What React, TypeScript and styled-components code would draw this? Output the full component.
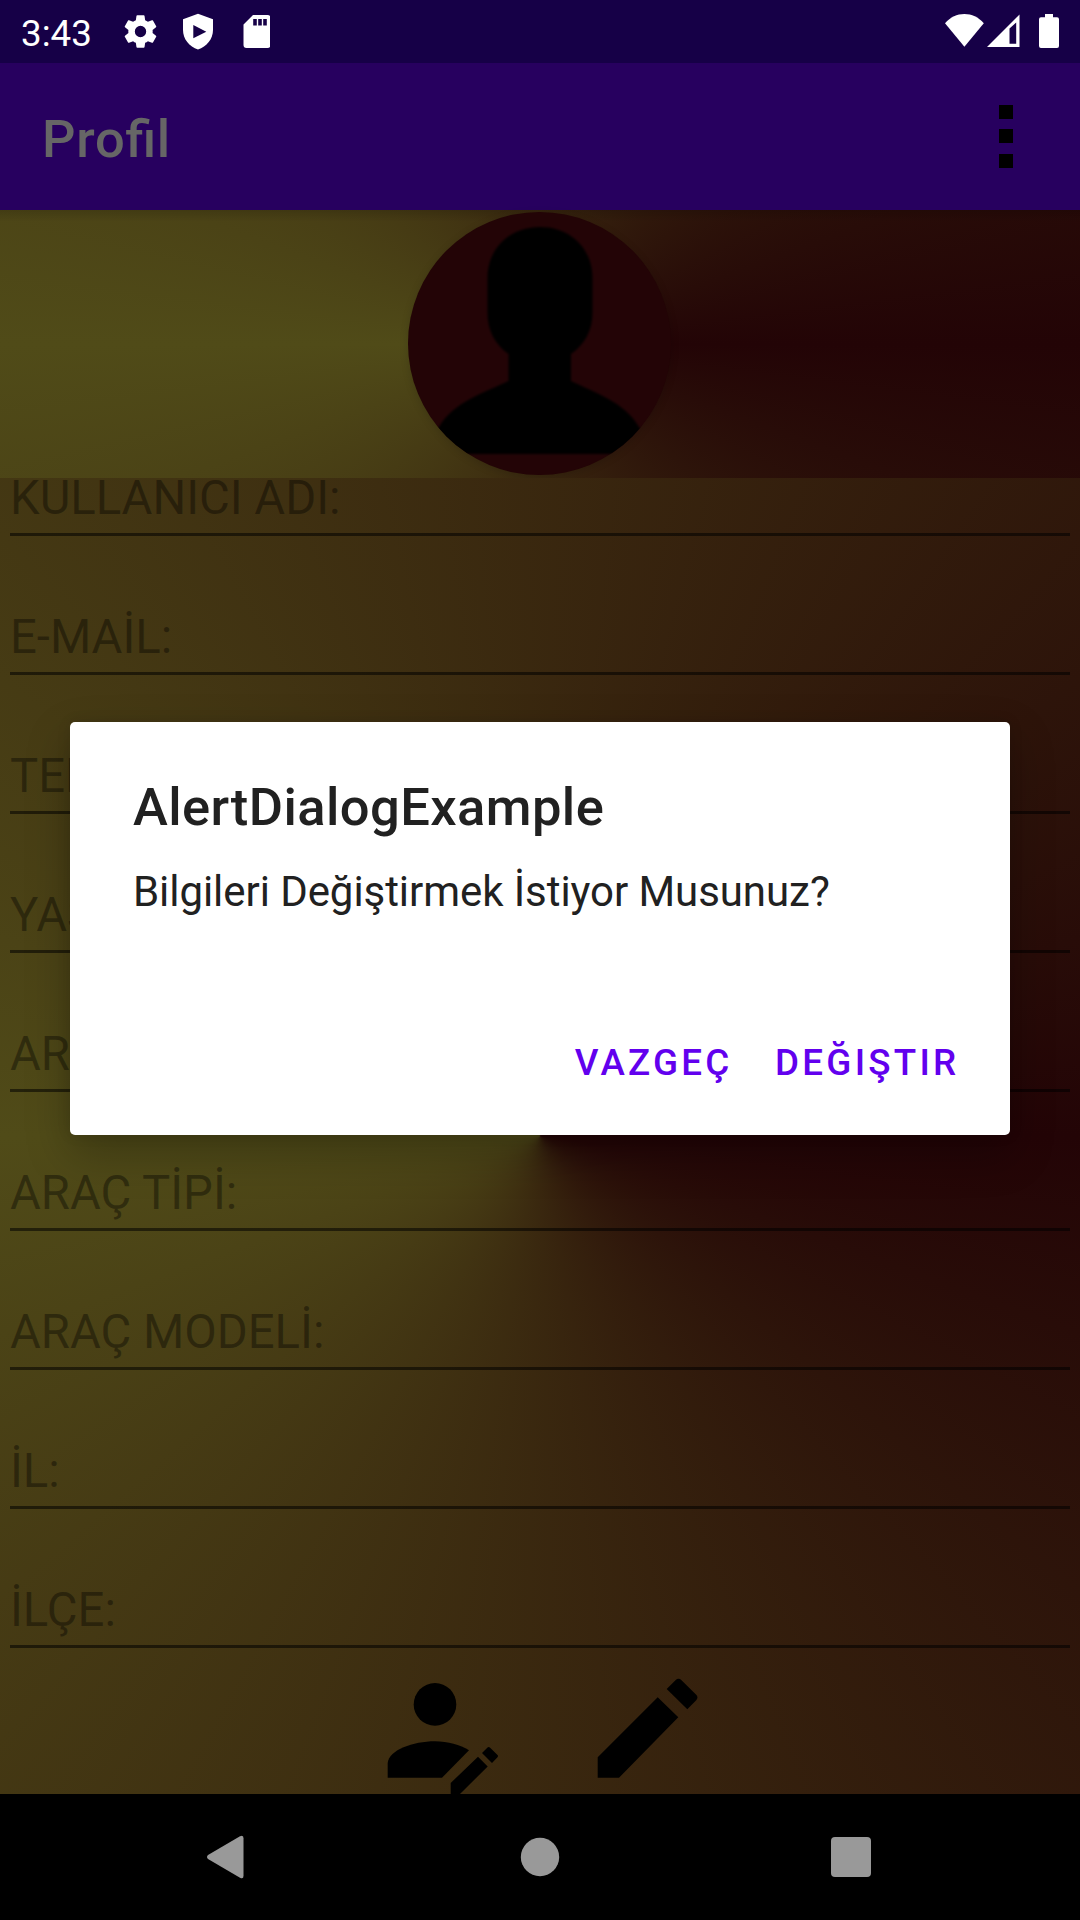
import React from "react";
import styled, { createGlobalStyle } from "styled-components";

const GlobalStyle = createGlobalStyle`
  * { box-sizing: border-box; }
  body { margin: 0; background: #000; font-family: Roboto, "Noto Sans", sans-serif; }
`;

const sweep = "conic-gradient(from 90deg at 50% 50%, #230406, #504b18, #230406)";

const Screen = styled.div`
  position: relative;
  display: flex;
  flex-direction: column;
  width: 1080px;
  height: 1920px;
  overflow: hidden;
`;

const StatusBar = styled.div`
  display: flex;
  justify-content: space-between;
  flex: none;
  height: 63px;
  padding: 0 21px 0 21px;
  background: #160047;
`;

const StatusGroup = styled.div<{ $gap: number }>`
  display: flex;
  align-items: flex-start;
  gap: ${(p) => p.$gap}px;
  padding-top: 12px;
`;

const Clock = styled.span`
  color: #fff;
  font-size: 36.75px;
  line-height: 43px;
  width: 76px;
`;

const StatusSpacer = styled.span`
  width: 13px;
`;

const AppBar = styled.header`
  display: flex;
  align-items: center;
  justify-content: space-between;
  flex: none;
  height: 147px;
  padding: 0 66px 0 42px;
  background: #27005f;
`;

const AppTitle = styled.h1`
  margin: 0;
  padding-top: 4px;
  color: #666;
  font-size: 52.5px;
  font-weight: 500;
  line-height: 62px;
  letter-spacing: 0.75px;
  font-feature-settings: "liga" 1;
`;

const Dots = styled.div`
  display: flex;
  flex-direction: column;
  gap: 10.5px;
  width: 15px;
  margin-bottom: 1px;
`;

const Dot = styled.i`
  width: 14px;
  height: 14px;
  background: #000;
`;

const Hero = styled.section`
  display: flex;
  justify-content: center;
  align-items: flex-start;
  flex: none;
  height: 268px;
  padding: 2px 1px 0 0;
  background: linear-gradient(rgba(0, 0, 0, 0.14), transparent 12px), ${sweep};
`;

const Avatar = styled.div`
  width: 263px;
  height: 263px;
  border-radius: 50%;
  overflow: hidden;
  background: #230406;
  box-shadow: 0 2px 8px rgba(0, 0, 0, 0.15);
`;

const Form = styled.main`
  display: flex;
  flex-direction: column;
  justify-content: flex-end;
  flex: none;
  height: 1316px;
  overflow: hidden;
  background: ${sweep};
`;

const Field = styled.label`
  display: flex;
  align-items: flex-end;
  flex: none;
  height: 139px;
  margin: 0 10px;
  padding-bottom: 7px;
  border-bottom: 3px solid rgba(0, 0, 0, 0.54);
  color: rgba(0, 0, 0, 0.38);
  font-size: 47.25px;
  line-height: 56px;

  &:first-child {
    height: 58px;
  }
`;

const Actions = styled.div`
  display: flex;
  flex: none;
  gap: 98px;
  height: 146px;
  padding: 28px 0 0 386px;
`;

const NavBar = styled.nav`
  display: flex;
  justify-content: space-between;
  align-items: center;
  flex: none;
  height: 126px;
  padding: 0 209px 0 206px;
  background: #000;
`;

const Overlay = styled.div`
  position: absolute;
  inset: 0;
  padding: 722px 70px 0;
`;

const Dialog = styled.div`
  display: flex;
  flex-direction: column;
  height: 413px;
  padding: 54px 50.5px 0 63px;
  border-radius: 5px;
  background: #fff;
  box-shadow: 0 18px 44px rgba(0, 0, 0, 0.26), 0 0 14px rgba(0, 0, 0, 0.1);
`;

const DialogTitle = styled.h2`
  margin: 0;
  color: #212121;
  font-size: 52.5px;
  font-weight: 500;
  line-height: 62px;
  letter-spacing: 0.42px;
`;

const Message = styled.p`
  margin: 29px 0 0;
  color: #212121;
  font-size: 42px;
  line-height: 50px;
  letter-spacing: -0.06px;
`;

const Buttons = styled.div`
  display: flex;
  justify-content: flex-end;
  gap: 42.5px;
  margin-top: 124px;
`;

const TextButton = styled.button`
  padding: 0;
  border: 0;
  background: none;
  color: #6200ee;
  font: 500 36.75px/44px Roboto, "Noto Sans", sans-serif;
  letter-spacing: 0.0885em;
`;

const fields = [
  "KULLANICI ADI:",
  "E-MAİL:",
  "TEL:",
  "YAŞ:",
  "ARAÇ:",
  "ARAÇ TİPİ:",
  "ARAÇ MODELİ:",
  "İL:",
  "İLÇE:",
];

const GearIcon = () => (
  <svg width="39" height="39" viewBox="0 0 24 24" fill="#fff">
    <path d="M19.43 12.98c.04-.32.07-.64.07-.98s-.03-.66-.07-.98l2.11-1.65c.19-.15.24-.42.12-.64l-2-3.46c-.12-.22-.39-.3-.61-.22l-2.49 1c-.52-.4-1.08-.73-1.69-.98l-.38-2.65A.49.49 0 0 0 14 2h-4c-.25 0-.46.18-.49.42l-.38 2.65c-.61.25-1.17.59-1.69.98l-2.49-1c-.23-.09-.49 0-.61.22l-2 3.46c-.13.22-.07.49.12.64l2.11 1.65c-.04.32-.07.65-.07.98s.03.66.07.98l-2.11 1.65c-.19.15-.24.42-.12.64l2 3.46c.12.22.39.3.61.22l2.49-1c.52.4 1.08.73 1.69.98l.38 2.65c.03.24.24.42.49.42h4c.25 0 .46-.18.49-.42l.38-2.65c.61-.25 1.17-.59 1.69-.98l2.49 1c.23.09.49 0 .61-.22l2-3.46c.12-.22.07-.49-.12-.64l-2.11-1.65zM12 15.500a3.500 3.500 0 1 1 0-7 3.500 3.500 0 0 1 0 7z" />
  </svg>
);

const ShieldIcon = () => (
  <svg width="30" height="38" viewBox="0 0 30 38" fill="#fff" fillRule="evenodd">
    <path d="M15 1.700 30 7.300V18c0 9-6.300 16.800-15 19.500C6.300 34.800 0 27 0 18V7.300zM10.300 13v13.300L23.300 19.700z" />
  </svg>
);

const SdIcon = () => (
  <svg width="33.5" height="37" viewBox="-6.5 0 33.5 37" fill="#fff" fillRule="evenodd">
    <path d="M9.500 3H24a3 3 0 0 1 3 3v27a3 3 0 0 1-3 3H3a3 3 0 0 1-3-3V12.500zM9.700 7v6.500h3.600V7zM14.700 7v6.500h3.600V7zM19.700 7v6.500h3.600V7z" />
  </svg>
);

const WifiIcon = () => (
  <svg width="39" height="36" viewBox="0 0 39 36" fill="#fff">
    <path d="M0 11.300C5.500 5 12 2 19.400 2S33.300 5 38.800 11.300L19.400 34.700z" />
  </svg>
);

const SignalIcon = () => (
  <svg width="33" height="36" viewBox="0 0 33 36" fill="#fff" fillRule="evenodd">
    <path d="M0 35 32.500 2.500V35zM22.500 16.500v15.300h6.700V10.500z" />
  </svg>
);

const BatteryIcon = () => (
  <svg width="20" height="37" viewBox="0 0 20 37" fill="#fff">
    <path d="M6 2h8v3.300h4a2 2 0 0 1 2 2V34a2 2 0 0 1-2 2H2a2 2 0 0 1-2-2V7.300a2 2 0 0 1 2-2h4z" />
  </svg>
);

const PersonSilhouette = () => (
  <svg width="263" height="263" viewBox="0 0 263 263">
    <defs>
      <filter id="soften" x="-5%" y="-5%" width="110%" height="110%">
        <feGaussianBlur stdDeviation="1.3" />
      </filter>
    </defs>
    <path
      filter="url(#soften)"
      d="M132 15C101 15 79.500 37 79.500 66v35c0 18 8 32 21 41v27C78 180 45 190 31 215L10 242H253L231 215C217 190 185 180 163 169v-27C176 133 184.500 119 184.500 101V66C184.500 37 163 15 132 15z"
    />
  </svg>
);

const EditUserIcon = () => (
  <svg width="112" height="118" viewBox="0 0 112 118">
    <circle cx="49" cy="28.400" r="21.300" />
    <path d="M1.700 101.700V87C3 74 27 65.300 49 65.300c13 0 25 3.500 34 9L56 101.700z" />
    <path d="M64.700 118v-11L92 80.700l9.700 9.700L74 118zM96 77l5.500-5.500q1.200-1.200 2.400 0l7.600 7.500q1 1 0 2.200L106 87z" />
  </svg>
);

const PencilIcon = () => (
  <svg width="105" height="104" viewBox="0 0 105 104">
    <path d="M1.700 101.700V81.300L61.700 21.300 82.300 41.300 23 101.700zM70.700 13 79.500 4.200q3-2.800 6 0L100.200 18.800q2.500 2.500 0 5.500L91.300 33.300z" />
  </svg>
);

export default function App() {
  return (
    <>
      <GlobalStyle />
      <Screen>
        <StatusBar>
          <StatusGroup $gap={23.5}>
            <Clock>3:43</Clock>
            <GearIcon />
            <ShieldIcon />
            <SdIcon />
          </StatusGroup>
          <StatusGroup $gap={3}>
            <WifiIcon />
            <SignalIcon />
            <StatusSpacer />
            <BatteryIcon />
          </StatusGroup>
        </StatusBar>
        <AppBar>
          <AppTitle>Profil</AppTitle>
          <Dots>
            <Dot />
            <Dot />
            <Dot />
          </Dots>
        </AppBar>
        <Hero>
          <Avatar>
            <PersonSilhouette />
          </Avatar>
        </Hero>
        <Form>
          {fields.map((f) => (
            <Field key={f}>{f}</Field>
          ))}
          <Actions>
            <EditUserIcon />
            <PencilIcon />
          </Actions>
        </Form>
        <NavBar>
          <svg width="43" height="44" viewBox="0 0 43 44" fill="#999">
            <path d="M34 1.300q3.500-2 3.500 2v37.400q0 4-3.500 2L2 24Q0 22 2 20z" />
          </svg>
          <svg width="40" height="40" viewBox="0 0 40 40" fill="#999">
            <circle cx="20" cy="20" r="19.200" />
          </svg>
          <svg width="40" height="40" viewBox="0 0 40 40" fill="#999">
            <rect width="40" height="40" rx="4" />
          </svg>
        </NavBar>
        <Overlay>
          <Dialog role="alertdialog">
            <DialogTitle>AlertDialogExample</DialogTitle>
            <Message>Bilgileri Değiştirmek İstiyor Musunuz?</Message>
            <Buttons>
              <TextButton>VAZGEÇ</TextButton>
              <TextButton>DEĞIŞTIR</TextButton>
            </Buttons>
          </Dialog>
        </Overlay>
      </Screen>
    </>
  );
}
